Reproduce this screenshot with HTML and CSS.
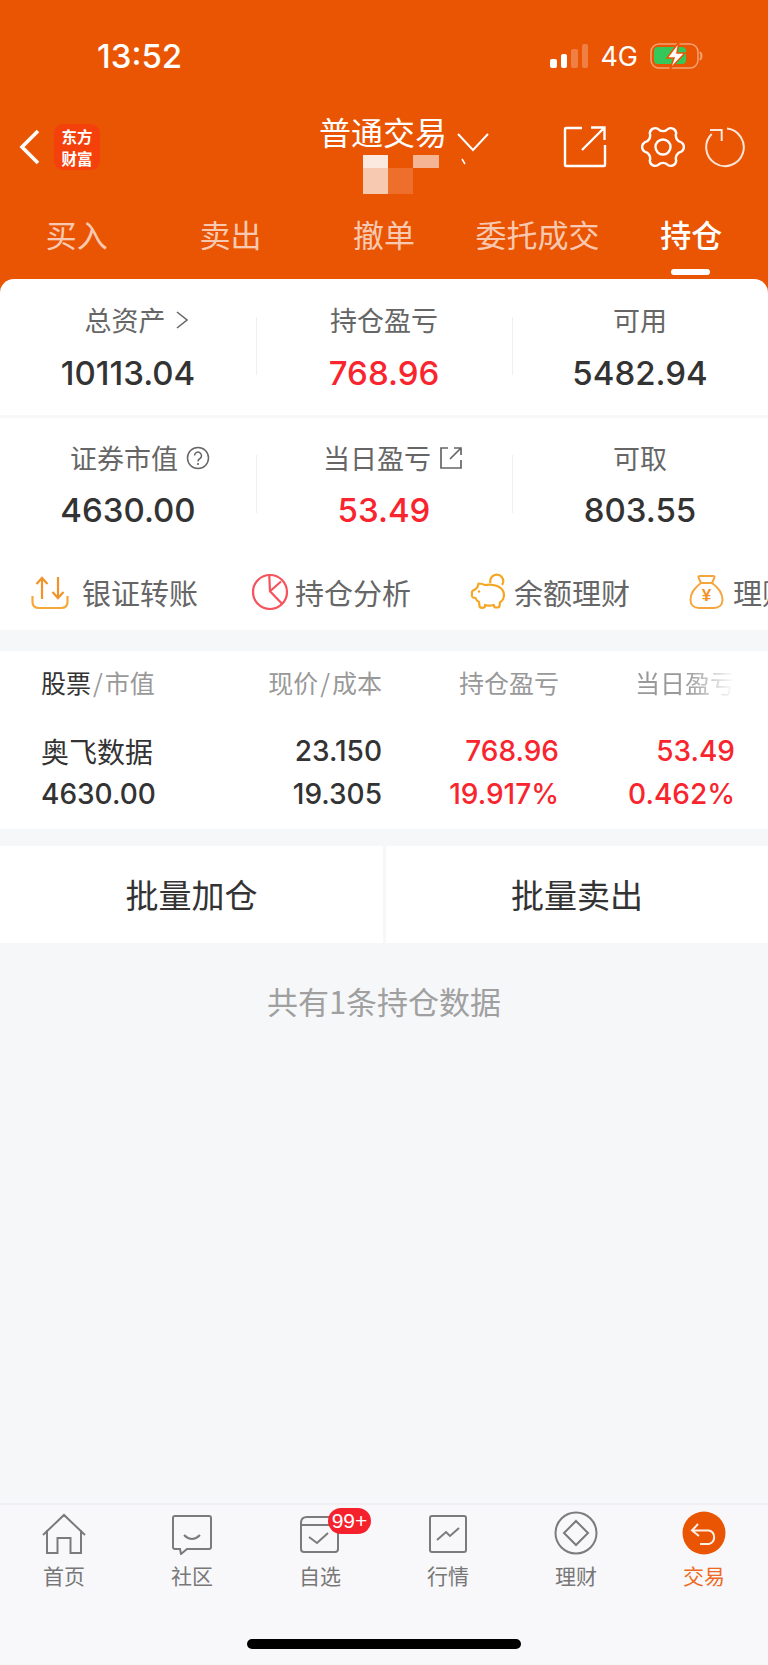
FILE: index.html
```html
<!DOCTYPE html>
<html lang="zh-CN">
<head>
  <meta charset="UTF-8">
  <title>持仓</title>
  <link rel="stylesheet" href="styles.css">
</head>
<body>

<div class="page">
  <header class="header">
    <div class="status">
      <span class="time">13:52</span>
      <div class="signal">
        <i class="on b1"></i><i class="on b2"></i><i class="b3"></i><i class="b4"></i>
      </div>
      <span class="net">4G</span>
      <svg class="battery" width="54" height="28" viewBox="0 0 54 28">
        <rect x="1" y="2" width="47" height="24" rx="8" fill="none" stroke="#fff" stroke-opacity=".45" stroke-width="1.5"/>
        <rect x="4" y="5" width="32" height="17" rx="4" fill="#34c759"/>
        <path d="M50 10 q3 4 0 8" fill="none" stroke="#fff" stroke-opacity=".45" stroke-width="2"/>
        <path d="M29 0 L17 16 H24 L20 27 L35 11 H27 Z" fill="#fff" stroke="#ea5504" stroke-width="1.5"/>
      </svg>
    </div>

    <div class="nav">
      <svg class="back" width="22" height="36" viewBox="0 0 22 36">
        <path d="M19 2 L3 18 L19 34" fill="none" stroke="#fff" stroke-width="3.6"/>
      </svg>
      <div class="logo"><span>东方</span><span>财富</span></div>
      <div class="title-box">
        <div class="title-row">
          <span class="title">普通交易</span>
          <svg class="title-arrow" width="34" height="34" viewBox="0 0 34 34">
            <path d="M2 3 L17 19 L32 3" fill="none" stroke="#fff" stroke-width="2"/>
            <path d="M6 28 l3 5" fill="none" stroke="#fff" stroke-width="1.5"/>
          </svg>
        </div>
        <div class="mosaic">
          <i class="m1"></i><i></i><i class="m3"></i>
          <i class="m4"></i><i class="m5"></i><i></i>
        </div>
      </div>
      <div class="nav-icons">
        <svg class="ico-share" width="44" height="44" viewBox="0 0 44 44">
          <path d="M19 3 H3 Q2 3 2 4 V40 Q2 41 3 41 H41 Q42 41 42 40 V20 M19 25 L41 3 M28 2.5 H41.5 V15" fill="none" stroke="#fff" stroke-width="2.4"/>
        </svg>
        <svg class="ico-gear" width="44" height="44" viewBox="0 0 44 44">
          <path d="M27.24 3.74 A5.5 5.5 0 0 1 35.2 8.33 A7 7 0 0 0 40.43 17.4 A5.5 5.5 0 0 1 40.43 26.6 A7 7 0 0 0 35.2 35.67 A5.5 5.5 0 0 1 27.24 40.26 A7 7 0 0 0 16.76 40.26 A5.5 5.5 0 0 1 8.8 35.67 A7 7 0 0 0 3.57 26.6 A5.5 5.5 0 0 1 3.57 17.4 A7 7 0 0 0 8.8 8.33 A5.5 5.5 0 0 1 16.76 3.74 A7 7 0 0 0 27.24 3.74 Z" fill="none" stroke="#fff" stroke-width="2.4"/>
          <circle cx="22" cy="22" r="7.5" fill="none" stroke="#fff" stroke-width="2.4"/>
        </svg>
        <svg class="ico-refresh" width="44" height="44" viewBox="0 0 44 44">
          <path d="M24 3.6 A18.8 18.8 0 1 1 8.7 9 M7 5 H18.7 V16" fill="none" stroke="#fff" stroke-opacity=".85" stroke-width="2"/>
        </svg>
      </div>
    </div>

    <nav class="tabs">
      <a>买入</a>
      <a>卖出</a>
      <a>撤单</a>
      <a>委托成交</a>
      <a class="active">持仓</a>
    </nav>
  </header>

  <section class="summary">
    <div class="stats first">
      <div class="stat">
        <div class="label has-icon">总资产
          <svg width="16" height="20" viewBox="0 0 16 20"><path d="M3 2 L13 10 L3 18" fill="none" stroke="#666" stroke-width="1.6"/></svg>
        </div>
        <div class="value">10113.04</div>
      </div>
      <div class="stat">
        <div class="label">持仓盈亏</div>
        <div class="value red">768.96</div>
      </div>
      <div class="stat">
        <div class="label">可用</div>
        <div class="value">5482.94</div>
      </div>
    </div>
    <div class="stats">
      <div class="stat">
        <div class="label has-icon wide">证券市值
          <svg width="24" height="24" viewBox="0 0 24 24">
            <circle cx="12" cy="12" r="10.5" fill="none" stroke="#666" stroke-width="1.5"/>
            <path d="M8.5 9.5 a3.5 3.5 0 1 1 5.5 3 q-2 1 -2 3" fill="none" stroke="#666" stroke-width="1.5"/>
            <circle cx="12" cy="18" r="1.1" fill="#666"/>
          </svg>
        </div>
        <div class="value">4630.00</div>
      </div>
      <div class="stat">
        <div class="label has-icon">当日盈亏
          <svg width="24" height="24" viewBox="0 0 24 24">
            <path d="M9 2 H2 V22 H22 V14 M11 13 L22 2 M15 2 H22 V9" fill="none" stroke="#666" stroke-width="1.7"/>
          </svg>
        </div>
        <div class="value red">53.49</div>
      </div>
      <div class="stat">
        <div class="label">可取</div>
        <div class="value">803.55</div>
      </div>
    </div>

    <div class="shortcuts">
      <a class="shortcut first">
        <svg width="38" height="36" viewBox="0 0 38 36">
          <path d="M1.5 22 V28 Q1.5 34 8 34 H30 Q36.5 34 36.5 28 V22" fill="none" stroke="#f5a83a" stroke-width="2.2"/>
          <path d="M11 25 V4 M5.5 10 L11 4 L16.5 10" fill="none" stroke="#f0932b" stroke-width="2.2"/>
          <path d="M27 3 V24 M21.5 18 L27 24 L32.5 18" fill="none" stroke="#f0932b" stroke-width="2.2"/>
        </svg>
        银证转账
      </a>
      <a class="shortcut">
        <svg width="38" height="38" viewBox="0 0 38 38">
          <circle cx="19" cy="19" r="17" fill="none" stroke="#f6525c" stroke-width="2.2"/>
          <path d="M18.3 3 L19 18.3 L31.3 31 M19 18.3 L30 8.5" fill="none" stroke="#f6525c" stroke-width="2.2"/>
        </svg>
        持仓分析
      </a>
      <a class="shortcut">
        <svg width="38" height="38" viewBox="0 0 38 38">
          <path d="M8.5 10.5 C11 10.5 13 11 15 12 C22 10.5 34 13 34 22 C34 26 32 28 30 29.5 L29.5 33 C29.5 35 24 35 24 33 L24 32 C21 32.8 17 32.8 15 32 L15 33 C15 35.5 9.5 35.5 9.5 33 L9 29 C7 28 6 26.5 5.5 25 L3 24.5 C1.5 24 1.5 18 3 17.5 L5 16.5 C6 15.5 7 15 7.5 14 Z" fill="none" stroke="#f5a623" stroke-width="2.2" stroke-linejoin="round"/>
          <path d="M20.5 10 A6.5 6.5 0 1 1 32 12" fill="none" stroke="#f5a623" stroke-width="2.2"/>
          <circle cx="9" cy="18.5" r="1.2" fill="#f5a623"/>
        </svg>
        余额理财
      </a>
      <a class="shortcut">
        <svg width="38" height="36" viewBox="0 0 38 36">
          <path d="M12 9 C5 14 1.5 20 1.5 26 C1.5 31 5 34 10 34 H25 C30 34 33.5 31 33.5 26 C33.5 20 30 14 23 9 Z" fill="none" stroke="#f5a53c" stroke-width="2"/>
          <path d="M12 9 L9.5 3.5 Q9 2 11 2 H24 Q26 2 25.5 3.5 L23 9" fill="none" stroke="#f5a53c" stroke-width="2"/>
          <text x="17.5" y="27" class="yen">¥</text>
        </svg>
        理财商城
      </a>
    </div>
  </section>

  <section class="table">
    <div class="grid-line table-head">
      <div><span class="dark">股票</span><span class="sep">/</span>市值</div>
      <div class="num">现价<span class="sep">/</span>成本</div>
      <div class="num">持仓盈亏</div>
      <div class="num fade">当日盈亏</div>
    </div>
    <div class="table-body">
      <div class="grid-line">
        <div class="name">奥飞数据</div>
        <div class="num digits">23.150</div>
        <div class="num digits red">768.96</div>
        <div class="num digits red">53.49</div>
      </div>
      <div class="grid-line">
        <div class="digits">4630.00</div>
        <div class="num digits">19.305</div>
        <div class="num digits red">19.917%</div>
        <div class="num digits red">0.462%</div>
      </div>
    </div>
  </section>

  <section class="actions">
    <a>批量加仓</a>
    <a>批量卖出</a>
  </section>

  <p class="count">共有1条持仓数据</p>

  <footer class="tabbar">
    <div class="tabbar-items">
      <a class="tab-item">
        <svg width="44" height="44" viewBox="0 0 44 44">
          <path d="M1 24 L22 4 L43 24 M5 19 V42 H15.5 V27 H28.5 V42 H39 V19" fill="none" stroke="#7b7b7b" stroke-width="2"/>
        </svg>
        首页
      </a>
      <a class="tab-item">
        <svg width="44" height="44" viewBox="0 0 44 44">
          <path d="M5 5 H39 Q41 5 41 7 V36 Q41 38 39 38 H17 L11 43 L10 38 H5 Q3 38 3 36 V7 Q3 5 5 5 Z" fill="none" stroke="#7b7b7b" stroke-width="2"/>
          <path d="M14 24 Q22 32 30 24" fill="none" stroke="#7b7b7b" stroke-width="2"/>
        </svg>
        社区
      </a>
      <a class="tab-item">
        <svg width="44" height="44" viewBox="0 0 44 44">
          <path d="M9 6 H35 Q40 6 40 11 V38 Q40 41 37 41 H6 Q3 41 3 38 V12 Q3 6 9 6 Z M3 14 H40" fill="none" stroke="#7b7b7b" stroke-width="2"/>
          <path d="M11 26 L19 32 L30 22" fill="none" stroke="#7b7b7b" stroke-width="2"/>
        </svg>
        自选
        <span class="badge">99+</span>
      </a>
      <a class="tab-item">
        <svg width="44" height="44" viewBox="0 0 44 44">
          <rect x="4" y="5" width="36" height="36" rx="2" fill="none" stroke="#7b7b7b" stroke-width="2"/>
          <path d="M11 29 L20 21 L24 25 L33 17" fill="none" stroke="#7b7b7b" stroke-width="2"/>
        </svg>
        行情
      </a>
      <a class="tab-item">
        <svg width="44" height="44" viewBox="0 0 44 44">
          <circle cx="22" cy="22" r="20.5" fill="none" stroke="#7b7b7b" stroke-width="2"/>
          <path d="M22 10 L34 22 L22 34 L10 22 Z" fill="none" stroke="#7b7b7b" stroke-width="2"/>
        </svg>
        理财
      </a>
      <a class="tab-item current">
        <svg width="44" height="44" viewBox="0 0 44 44">
          <circle cx="22" cy="22" r="21.5" fill="#ea5504"/>
          <path d="M16 13 L10 19.5 L17 25 M10 19.5 H27 A7 7 0 0 1 27 33 H18" fill="none" stroke="#fff" stroke-opacity=".9" stroke-width="2"/>
        </svg>
        交易
      </a>
    </div>
    <div class="home-bar"></div>
  </footer>
</div>

</body>
</html>
```

FILE: styles.css
```css
* {
  box-sizing: border-box;
}

body {
  margin: 0;
  font-family: "Noto Sans CJK SC", "Liberation Sans", sans-serif;
  background-color: #f6f7f9;
  color: #333;
}

a {
  color: inherit;
  text-decoration: none;
}

svg {
  display: block;
  flex-shrink: 0;
}

.page {
  width: 768px;
  height: 1665px;
  display: flex;
  flex-direction: column;
  overflow: hidden;
}

/* orange header */
.header {
  height: 293px;
  margin-bottom: -14px;
  padding-bottom: 14px;
  background-color: #ea5504;
  color: #fff;
}

.status {
  height: 100px;
  padding: 12px 64px 0 97px;
  display: flex;
  align-items: center;
}

.time {
  font-family: Inter, sans-serif;
  font-size: 33px;
  font-weight: 500;
}

.signal {
  margin-left: auto;
  display: flex;
  align-items: flex-end;
  gap: 4px;
  height: 24px;
}

.signal i {
  width: 6.5px;
  border-radius: 2px;
  background-color: rgba(255, 255, 255, 0.25);
}

.signal .on {
  background-color: #fff;
}

.signal .b1 { height: 9px; }
.signal .b2 { height: 14px; }
.signal .b3 { height: 19px; }
.signal .b4 { height: 24px; }

.net {
  margin-left: 12px;
  margin-right: 12px;
  font-family: Inter, sans-serif;
  font-size: 27px;
}

.nav {
  height: 94px;
  padding: 0 21px 0 19px;
  display: flex;
  align-items: center;
}

.logo {
  width: 46px;
  height: 46px;
  margin-left: 13px;
  border-radius: 9px;
  background-color: #f4410c;
  font-size: 15.5px;
  font-weight: 700;
  line-height: 22.5px;
  display: flex;
  flex-direction: column;
  align-items: center;
  justify-content: center;
}

.title-box {
  margin-left: 219px;
  align-self: flex-start;
  margin-top: 12px;
}

.title-row {
  display: flex;
  height: 43px;
}

.title {
  font-size: 32px;
  line-height: 38px;
}

.title-arrow {
  margin-left: 9px;
  margin-top: 19px;
}

.mosaic {
  margin-left: 44px;
  display: grid;
  grid-template-columns: 25px 25px 26px;
  grid-template-rows: 13px 26px;
}

.mosaic .m1 { background-color: #fbe8de; }
.mosaic .m3 { background-color: #f5b595; }
.mosaic .m4 { background-color: #f7c9b0; }
.mosaic .m5 { background-color: #ee6f2c; }

.nav-icons {
  margin-left: auto;
  display: flex;
  gap: 34px;
}

.ico-refresh {
  margin-left: -16px;
}

.tabs {
  height: 85px;
  display: grid;
  grid-template-columns: repeat(5, 1fr);
}

.tabs a {
  position: relative;
  padding-top: 18px;
  text-align: center;
  font-size: 31px;
  line-height: 44px;
  color: rgba(255, 255, 255, 0.7);
}

.tabs a.active {
  color: #fff;
  font-weight: 500;
}

.tabs a.active::after {
  content: "";
  position: absolute;
  left: 50%;
  bottom: 4px;
  width: 39px;
  height: 6px;
  margin-left: -20px;
  border-radius: 3px;
  background-color: #fff;
}

/* asset summary card */
.summary {
  position: relative;
  height: 351px;
  border-radius: 14px 14px 0 0;
  background-color: #fff;
}

.stats {
  padding-top: 22px;
  display: grid;
  grid-template-columns: repeat(3, 1fr);
}

.stats.first {
  height: 139px;
  padding-top: 23px;
  border-bottom: 3px solid #f7f8fa;
}

.stat {
  position: relative;
  text-align: center;
}

.stat + .stat::before {
  content: "";
  position: absolute;
  left: 0;
  top: 15px;
  width: 1px;
  height: 58px;
  background-color: #f0f0f2;
}

.label {
  height: 36px;
  font-size: 27px;
  line-height: 36px;
  color: #666;
  display: flex;
  justify-content: center;
  align-items: center;
  gap: 8px;
}

.label.has-icon {
  padding-left: 18px;
}

.label.wide {
  padding-left: 24px;
}

.value {
  margin-top: 14px;
  font-family: Inter, sans-serif;
  font-size: 33px;
  font-weight: 500;
  line-height: 40px;
  color: #333;
}

.first .value {
  margin-top: 15px;
}

.red,
.value.red {
  color: #f8252e;
}

.shortcuts {
  height: 100px;
  padding: 24px 0 0 31px;
  display: flex;
  align-items: center;
  overflow: hidden;
  white-space: nowrap;
}

.shortcut {
  flex-shrink: 0;
  width: 219px;
  display: flex;
  align-items: center;
  gap: 6px;
  font-size: 29px;
  color: #666;
}

.shortcut.first {
  width: 220px;
  gap: 13px;
}

.yen {
  font-family: "Liberation Sans", sans-serif;
  font-size: 17px;
  font-weight: 700;
  text-anchor: middle;
  fill: #f0932b;
}

/* holdings table */
.table {
  height: 178px;
  margin-top: 21px;
  background-color: #fff;
}

.grid-line {
  padding-left: 41px;
  display: grid;
  grid-template-columns: 164px 177px 177px 176px;
  font-size: 28px;
  line-height: 43px;
}

.table-head {
  height: 62px;
  font-size: 25px;
  line-height: 62px;
  color: #999;
}

.dark {
  color: #333;
}

.sep {
  margin: 0 2px;
}

.table-body {
  padding-top: 17px;
}

.num {
  text-align: right;
}

.digits {
  font-family: Inter, sans-serif;
  font-size: 28px;
  font-weight: 500;
}

.fade {
  -webkit-mask-image: linear-gradient(to right, #000 72%, transparent 100%);
  mask-image: linear-gradient(to right, #000 72%, transparent 100%);
}

.actions {
  height: 97px;
  margin-top: 17px;
  display: grid;
  grid-template-columns: 383px 382px;
  gap: 3px;
}

.actions a {
  background-color: #fff;
  text-align: center;
  font-size: 33px;
  line-height: 97px;
  color: #333;
}

.count {
  margin: 37px 0 0;
  text-align: center;
  font-size: 31px;
  line-height: 42px;
  color: #a0a0a0;
}

/* bottom tabs */
.tabbar {
  margin-top: auto;
  height: 162px;
  padding-top: 6px;
  border-top: 2px solid #eff0f4;
  background-color: #f8f8fb;
}

.tabbar-items {
  display: grid;
  grid-template-columns: repeat(6, 1fr);
}

.tab-item {
  position: relative;
  display: flex;
  flex-direction: column;
  align-items: center;
  gap: 6px;
  font-size: 21px;
  line-height: 28px;
  color: #777;
}

.tab-item.current {
  color: #ee6a22;
}

.badge {
  position: absolute;
  left: 72px;
  top: -3px;
  width: 43px;
  height: 26px;
  border-radius: 13px;
  background-color: #f5222d;
  color: #fff;
  text-align: center;
  font-family: "Liberation Sans", sans-serif;
  font-size: 21px;
  line-height: 26px;
}

.home-bar {
  width: 274px;
  height: 10px;
  margin: 50px auto 0;
  border-radius: 5px;
  background-color: #000;
}
```
